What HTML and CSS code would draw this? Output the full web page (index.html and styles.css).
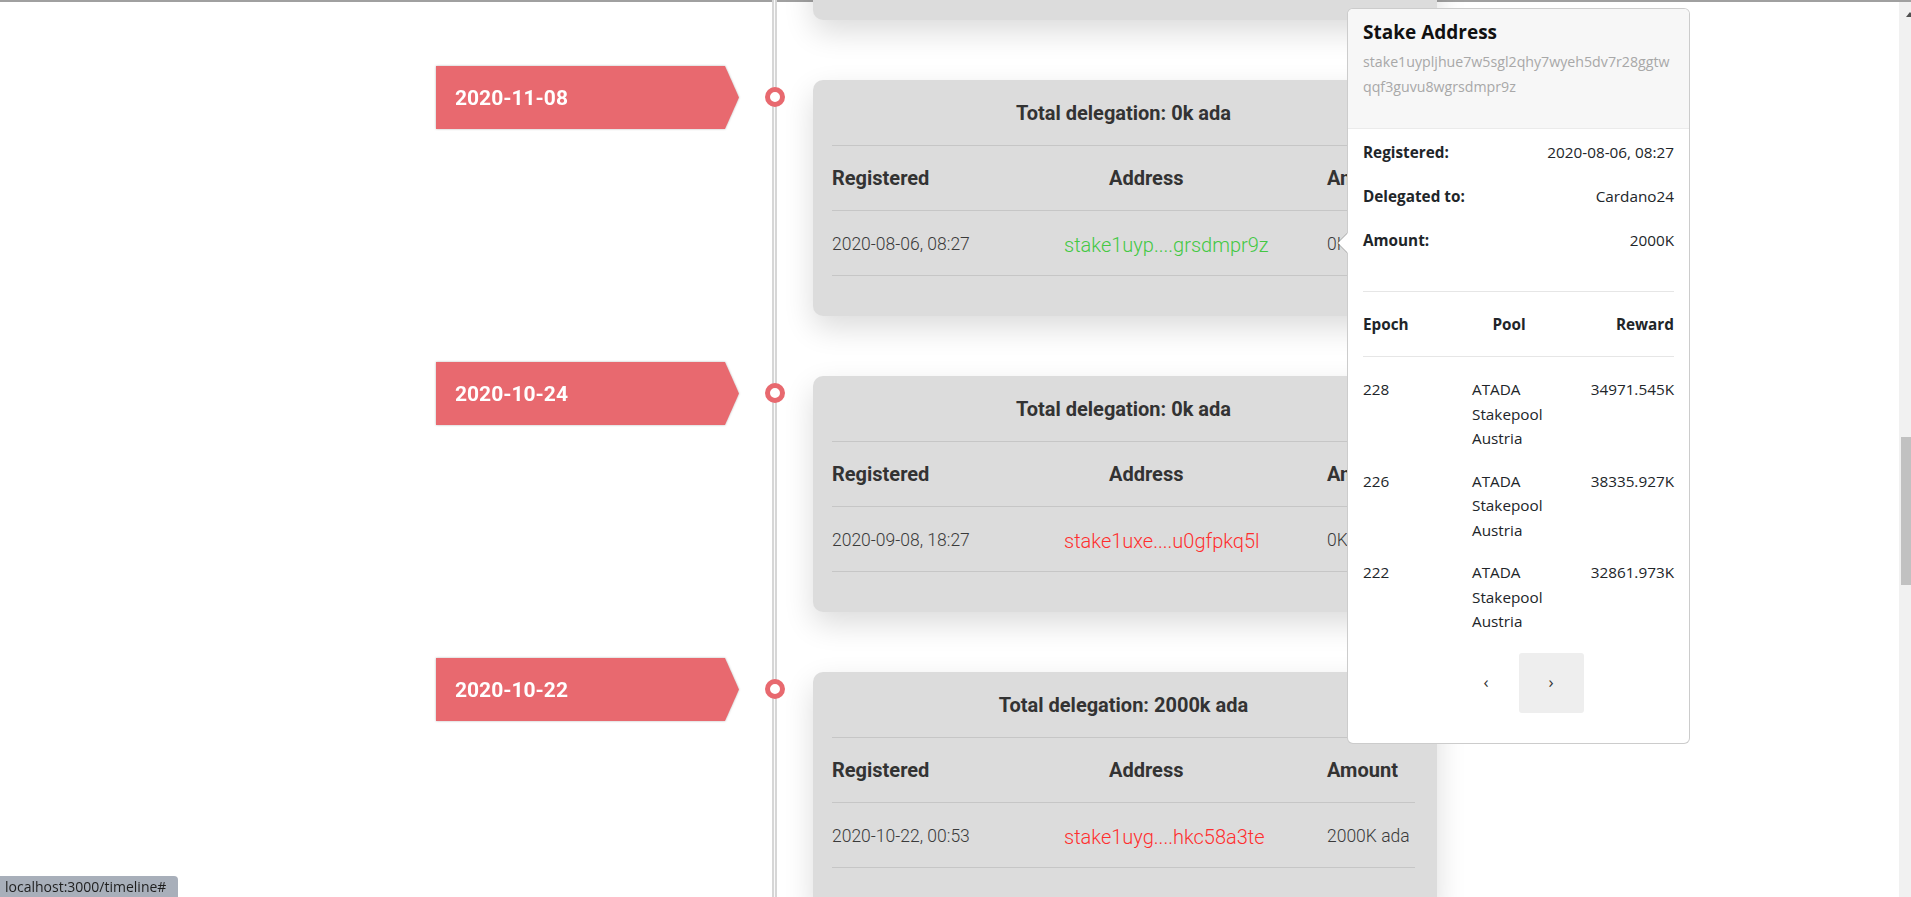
FILE: index.html
```html
<!DOCTYPE html>
<html lang="en">
<head>
<meta charset="utf-8">
<title>Timeline</title>
<link rel="stylesheet" href="styles.css">
</head>
<body>
<div class="topline"></div>
<main class="timeline">
  <section class="item">
    <div class="badge-wrap"><div class="badge">2020-11-22</div></div>
    <div class="marker"><span class="dot"></span></div>
    <article class="card">
      <h2 class="card-title">Total delegation: 0k ada</h2>
      <div class="row head"><span>Registered</span><span class="th-addr">Address</span><span>Amount</span></div>
      <div class="row data"><span>2020-08-01, 11:02</span><span class="addr ok">stake1uq3....m4x2ad7k</span><span>0K ada</span></div>
    </article>
  </section>
  <section class="item">
    <div class="badge-wrap"><div class="badge">2020-11-08</div></div>
    <div class="marker"><span class="dot"></span></div>
    <article class="card">
      <h2 class="card-title">Total delegation: 0k ada</h2>
      <div class="row head"><span>Registered</span><span class="th-addr">Address</span><span>Amount</span></div>
      <div class="row data"><span>2020-08-06, 08:27</span><span class="addr ok">stake1uyp....grsdmpr9z</span><span>0K ada</span></div>
    </article>
  </section>
  <section class="item">
    <div class="badge-wrap"><div class="badge">2020-10-24</div></div>
    <div class="marker"><span class="dot"></span></div>
    <article class="card">
      <h2 class="card-title">Total delegation: 0k ada</h2>
      <div class="row head"><span>Registered</span><span class="th-addr">Address</span><span>Amount</span></div>
      <div class="row data"><span>2020-09-08, 18:27</span><span class="addr bad">stake1uxe....u0gfpkq5l</span><span>0K ada</span></div>
    </article>
  </section>
  <section class="item">
    <div class="badge-wrap"><div class="badge">2020-10-22</div></div>
    <div class="marker"><span class="dot"></span></div>
    <article class="card">
      <h2 class="card-title">Total delegation: 2000k ada</h2>
      <div class="row head"><span>Registered</span><span class="th-addr">Address</span><span>Amount</span></div>
      <div class="row data"><span>2020-10-22, 00:53</span><span class="addr bad">stake1uyg....hkc58a3te</span><span>2000K ada</span></div>
    </article>
  </section>
</main>

<div class="popover">
  <span class="arrow"></span>
  <div class="pop-header">
    <h3 class="pop-title">Stake Address</h3>
    <p class="pop-addr">stake1uypljhue7w5sgl2qhy7wyeh5dv7r28ggtw<br>qqf3guvu8wgrsdmpr9z</p>
  </div>
  <div class="pop-body">
    <div class="kv"><span class="k">Registered:</span><span>2020-08-06, 08:27</span></div>
    <div class="kv"><span class="k">Delegated to:</span><span>Cardano24</span></div>
    <div class="kv"><span class="k">Amount:</span><span>2000K</span></div>
    <div class="rewards">
      <div class="rw rw-head"><span>Epoch</span><span class="c">Pool</span><span class="r">Reward</span></div>
      <div class="rw"><span>228</span><span>ATADA Stakepool Austria</span><span class="r">34971.545K</span></div>
      <div class="rw"><span>226</span><span>ATADA Stakepool Austria</span><span class="r">38335.927K</span></div>
      <div class="rw"><span>222</span><span>ATADA Stakepool Austria</span><span class="r">32861.973K</span></div>
    </div>
    <nav class="pager"><a class="pg" href="#">&#8249;</a><a class="pg active" href="#">&#8250;</a></nav>
  </div>
</div>

<div class="status">localhost:3000/timeline#</div>
<div class="scrollbar"><span class="sb-up"></span><span class="thumb"></span></div>
</body>
</html>
```

FILE: styles.css
```css
* { box-sizing: border-box; }

html, body {
  margin: 0;
  height: 100%;
  overflow: hidden;
  background: #fff;
}

body {
  font-family: Roboto, "Liberation Sans", sans-serif;
  color: #333;
}

.topline {
  height: 2px;
  background: #a0a0a0;
}

.timeline {
  margin: -232px 0 0 436px;
  width: 1001px;
  background: linear-gradient(to right,
    transparent 336px, #d6d6d6 336px, #d6d6d6 338px,
    #fafafa 338px, #fafafa 339px,
    #d6d6d6 339px, #d6d6d6 341px, transparent 341px);
}

.item {
  display: flex;
  align-items: flex-start;
  padding-bottom: 46px;
}

.badge-wrap {
  flex: none;
  width: 303px;
  height: 63px;
  filter: drop-shadow(0 0 1px rgba(0, 0, 0, 0.28));
}

.badge {
  height: 100%;
  background: #e8696f;
  clip-path: polygon(0 0, 289px 0, 100% 50%, 289px 100%, 0 100%);
  color: #fff;
  font: 700 21px Roboto, sans-serif;
  display: flex;
  align-items: center;
  padding-left: 19px;
}

.marker {
  flex: none;
  width: 74px;
  padding: 21px 0 0 26px;
}

.dot {
  display: block;
  width: 20px;
  height: 20px;
  border-radius: 50%;
  border: 5px solid #e8696f;
  background: #fff;
}

.card {
  flex: none;
  width: 624px;
  margin-top: 14px;
  background: #dcdcdc;
  border-radius: 10px;
  box-shadow: 0 12px 30px rgba(0, 0, 0, 0.14);
  padding: 0 22px 40px 19px;
}

.card-title {
  margin: 0;
  height: 66px;
  padding-top: 1px;
  border-bottom: 1px solid #c6c6c6;
  display: flex;
  align-items: center;
  justify-content: center;
  font: 700 20px Roboto, sans-serif;
  color: #333;
}

.row {
  display: grid;
  grid-template-columns: 232px 263px 1fr;
  align-items: center;
  height: 65px;
  border-bottom: 1px solid #c6c6c6;
}

.row.head {
  font: 700 20px Roboto, sans-serif;
  color: #333;
}

.th-addr { padding-left: 45px; }

.row.data {
  height: 65px;
  font: 300 17.5px Roboto, sans-serif;
  color: #3a3a3a;
  padding-top: 2px;
}

.row.data .addr {
  font-size: 20px;
  padding-top: 2px;
}

.addr.ok { color: #43c843; }
.addr.bad { color: #ff2e2e; }

/* popover */
.popover {
  position: absolute;
  top: 8px;
  left: 1347px;
  width: 343px;
  background: #fff;
  border: 1px solid rgba(0, 0, 0, 0.2);
  border-radius: 6px;
  font-family: "Open Sans", sans-serif;
  color: #212529;
  z-index: 10;
}

.arrow {
  position: absolute;
  left: -11px;
  top: 224px;
  width: 10px;
  height: 20px;
}

.arrow::before,
.arrow::after {
  content: "";
  position: absolute;
  top: 0;
  border-style: solid;
  border-width: 10px 10px 10px 0;
  border-color: transparent;
}

.arrow::before { left: 0; border-right-color: rgba(0, 0, 0, 0.25); }
.arrow::after { left: 1px; border-right-color: #fff; }

.pop-header {
  background: #f7f7f7;
  border-bottom: 1px solid #ebebeb;
  border-radius: 5px 5px 0 0;
  padding: 11px 15px 9px;
}

.pop-title {
  margin: 0 0 6px;
  font: 700 19px/24px "Open Sans", sans-serif;
  color: #111;
}

.pop-addr {
  margin: 0 0 20px;
  font-size: 14.2px;
  line-height: 24.5px;
  color: #a8a8a8;
}

.pop-body {
  padding: 1px 15px 30px;
  font-size: 15.3px;
  line-height: 24.5px;
}

.kv {
  display: flex;
  justify-content: space-between;
  align-items: center;
  height: 44px;
}

.k { font-weight: 700; }

.rewards {
  margin-top: 29px;
  border-top: 1px solid #e6e6e6;
}

.rw {
  display: grid;
  grid-template-columns: 109px 74px 1fr;
  padding: 9px 0;
}

.rw-head {
  height: 65px;
  align-items: center;
  font-weight: 700;
  border-bottom: 1px solid #e6e6e6;
  margin-bottom: 11px;
}

.rw .c { text-align: center; }
.rw .r { text-align: right; }

.pager {
  display: flex;
  justify-content: center;
  margin-top: 10px;
}

.pg {
  width: 65px;
  height: 60px;
  display: flex;
  align-items: center;
  justify-content: center;
  color: #333;
  text-decoration: none;
  font-size: 17px;
  border-radius: 3px;
}

.pg.active { background: #eee; }

/* browser chrome */
.status {
  position: fixed;
  left: 0;
  bottom: 0;
  height: 21px;
  padding: 0 12px 0 5px;
  background: #a8afba;
  color: #1f1f1f;
  font: 14px/21px "Open Sans", sans-serif;
  border-top-right-radius: 4px;
}

.scrollbar {
  position: fixed;
  top: 2px;
  right: 0;
  bottom: 0;
  width: 12px;
  background: #f1f1f1;
}

.thumb {
  position: absolute;
  top: 435px;
  left: 2px;
  right: 0;
  height: 148px;
  background: #c1c1c1;
}

.sb-up {
  position: absolute;
  top: 10px;
  right: -3px;
  width: 0;
  height: 0;
  border-left: 4px solid transparent;
  border-right: 4px solid transparent;
  border-bottom: 5px solid #505050;
}
```
